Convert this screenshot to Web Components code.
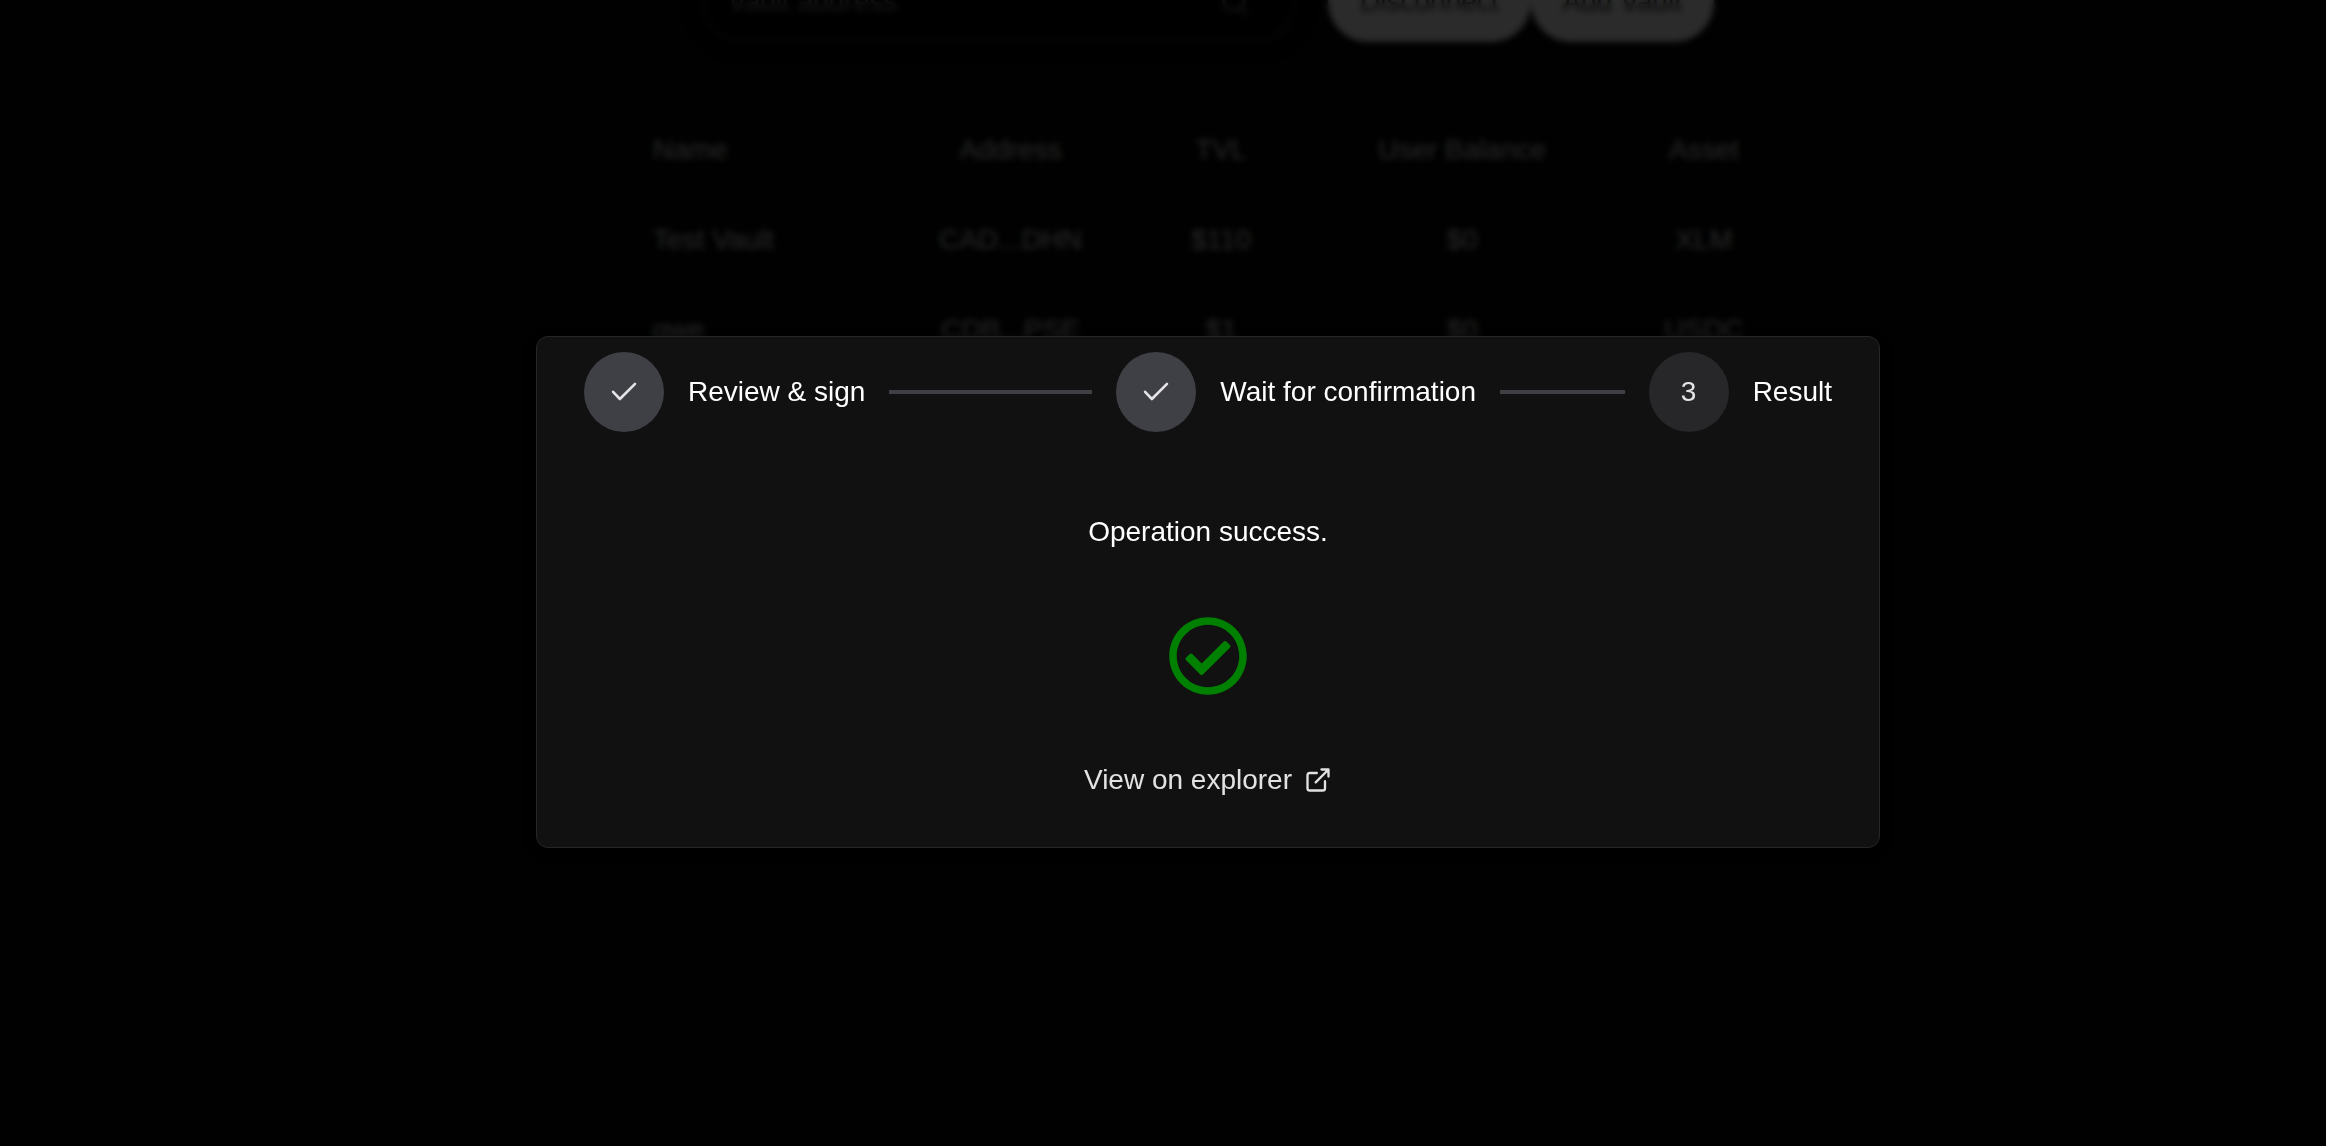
<!DOCTYPE html>
<html lang="en">
<head>
<meta charset="utf-8">
<title>Vaults</title>
<style>
  html, body { margin: 0; height: 100%; background: #050505; overflow: hidden; }
  body { font: 28px/40px "Liberation Sans", Arial, Helvetica, sans-serif; color: #fff; }
</style>
</head>
<body>
<vault-page></vault-page>
<modal-layer>
  <step-list slot="steps">
    <step-item done>Review &amp; sign</step-item>
    <step-item done>Wait for confirmation</step-item>
    <step-item index="3" last>Result</step-item>
  </step-list>
  <tx-result message="Operation success.">View on explorer</tx-result>
</modal-layer>
<script>
const define = (name, html) => customElements.define(name, class extends HTMLElement {
  connectedCallback() {
    if (this.shadowRoot) return;
    this.attachShadow({ mode: 'open' }).innerHTML = typeof html === 'function' ? html(this) : html;
  }
});

define('pill-button', `
<style>
  :host { display: flex; align-items: center; height: 80px; padding: 0 32px; box-sizing: border-box;
    border-radius: 40px; background: #d6d6d6; color: #222; white-space: nowrap; }
</style><slot></slot>`);

define('search-field', `
<style>
  :host { display: flex; align-items: center; justify-content: space-between; box-sizing: border-box;
    width: 594px; height: 80px; padding: 0 44px 0 24px; border: 2px solid #262626; border-radius: 40px;
    background: #030303; color: #6e6e6e; box-shadow: 0 0 16px 4px #000; }
  svg { display: block; width: 30px; height: 30px; }
</style>
<slot></slot>
<svg viewBox="0 0 24 24" fill="none" stroke="currentColor" stroke-width="2" stroke-linecap="round"><circle cx="11" cy="11" r="8"/><path d="M21 21l-4.3-4.3"/></svg>`);

define('vault-table', () => {
  const rows = [
    ['Name', 'Address', 'TVL', 'User Balance', 'Asset'],
    ['Test Vault', 'CAD...DHN', '$110', '$0', 'XLM'],
    ['qwe', 'CDB...PSE', '$1', '$0', 'USDC']
  ];
  return `
<style>
  :host { display: block; width: 1158px; color: #c4c4c4; }
  .row { display: grid; grid-template-columns: 253px 257px 164px 318px 166px; align-items: center;
    height: 90px; box-sizing: border-box; border-bottom: 2px solid #141414; text-align: center; }
  .row span:first-child { text-align: left; padding-left: 24px; }
</style>` + rows.map(r => `<div class="row">${r.map(c => `<span>${c}</span>`).join('')}</div>`).join('');
});

define('vault-page', `
<style>
  :host { display: flex; flex-direction: column; align-items: center; gap: 64px; height: 1146px;
    box-sizing: border-box; padding-left: 90px; overflow: hidden; background: #050505; }
  .bar { display: flex; margin-top: -38px; }
  search-field { margin-right: 32px; }
</style>
<div class="bar">
  <search-field>Vault address</search-field>
  <pill-button>Disconnect</pill-button>
  <pill-button>Add Vault</pill-button>
</div>
<vault-table></vault-table>`);

define('modal-layer', `
<style>
  :host { position: absolute; inset: 0; display: flex; justify-content: center; align-items: flex-start;
    padding: 336px 0 0 90px; box-sizing: border-box; background: rgba(0,0,0,.8);
    backdrop-filter: blur(3px); }
  .dialog { display: flex; flex-direction: column; gap: 80px; width: 1344px; height: 512px;
    box-sizing: border-box; padding: 15px 47px; border: 1px solid #272727; border-radius: 12px;
    background: #111; box-shadow: 0 4px 16px rgba(0,0,0,.5); }
</style>
<div class="dialog"><slot name="steps"></slot><slot></slot></div>`);

define('step-list', `
<style>:host { display: flex; gap: 24px; height: 80px; }</style><slot></slot>`);

define('step-item', el => `
<style>
  :host { display: flex; align-items: center; gap: 24px; flex: 1 1 0; white-space: nowrap; }
  :host([last]) { flex: none; }
  .dot { display: flex; align-items: center; justify-content: center; flex: none; width: 80px; height: 80px;
    border-radius: 50%; background: #27272a; color: #e4e4e7; }
  :host([done]) .dot { background: #3f3f46; }
  svg { display: block; width: 80px; height: 80px; }
  .line { flex: 1; height: 4px; background: #3f3f46; }
</style>
<div class="dot">${el.hasAttribute('done')
  ? '<svg viewBox="0 0 80 80" fill="none" stroke="currentColor" stroke-width="2.6" stroke-linecap="round" stroke-linejoin="round"><path d="M29.1 39.8l6.8 7.2L51 31.8"/></svg>'
  : el.getAttribute('index')}</div>
<slot></slot>
${el.hasAttribute('last') ? '' : '<div class="line"></div>'}`);

define('tx-result', el => `
<style>
  :host { display: flex; flex-direction: column; align-items: center; gap: 64px; }
  .ok { display: block; width: 80px; height: 80px; fill: green; }
  .link { display: flex; align-items: center; gap: 12px; color: #e2e2e2; }
  .link svg { display: block; width: 28px; height: 28px; }
</style>
<div>${el.getAttribute('message')}</div>
<svg class="ok" viewBox="0 0 512 512"><path d="M256 8C119.033 8 8 119.033 8 256s111.033 248 248 248 248-111.033 248-248S392.967 8 256 8zm0 48c110.532 0 200 89.451 200 200 0 110.532-89.451 200-200 200-110.532 0-200-89.451-200-200 0-110.532 89.451-200 200-200m140.204 130.267l-22.536-22.718c-4.667-4.705-12.265-4.736-16.97-.068L215.346 303.697l-59.792-60.277c-4.667-4.705-12.265-4.736-16.97-.069l-22.719 22.536c-4.705 4.667-4.736 12.265-.068 16.971l90.781 91.516c4.667 4.705 12.265 4.736 16.97.068l172.589-171.204c4.704-4.668 4.734-12.266.067-16.971z"/></svg>
<div class="link"><slot></slot><svg viewBox="0 0 24 24" fill="none" stroke="currentColor" stroke-width="2" stroke-linecap="round" stroke-linejoin="round"><path d="M18 13v6a2 2 0 0 1-2 2H5a2 2 0 0 1-2-2V8a2 2 0 0 1 2-2h6M15 3h6v6M10 14L21 3"/></svg></div>`);
</script>
</body>
</html>
